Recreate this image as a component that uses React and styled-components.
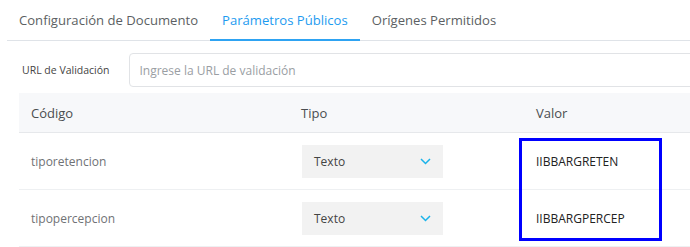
import styled, { createGlobalStyle } from 'styled-components';

const GlobalStyle = createGlobalStyle`
  *, *::before, *::after {
    box-sizing: border-box;
  }
  body {
    margin: 0;
    background: #fff;
    font-family: 'Open Sans', 'Liberation Sans', sans-serif;
  }
`;

const Page = styled.div`
  position: relative;
  width: 690px;
  height: 247px;
  overflow: hidden;
  padding-left: 7px;
`;

const Tabs = styled.div`
  display: flex;
  height: 41px;
  border-bottom: 1px solid #dfe3e8;
`;

const Tab = styled.div`
  display: flex;
  align-items: center;
  padding: 0 12px;
  font-size: 13.1px;
  color: ${p => (p.$active ? '#1d9bf0' : '#5c5f63')};
  border-bottom: 2px solid ${p => (p.$active ? '#2ea3f2' : 'transparent')};
  margin-bottom: -1px;
  white-space: nowrap;
`;

const UrlRow = styled.div`
  display: flex;
  align-items: center;
  padding: 12px 0 6px 15px;
  gap: 20px;
`;

const Label = styled.label`
  font-size: 10.5px;
  color: #444;
  white-space: nowrap;
`;

const Input = styled.input`
  flex: 1;
  height: 34px;
  margin-right: -10px;
  border: 1px solid #e1e3e6;
  border-radius: 4px;
  padding: 0 9px;
  font-family: inherit;
  font-size: 12px;
  color: #333;
  outline: none;
  &::placeholder {
    color: #9a9ea3;
  }
`;

const Table = styled.div`
  margin-left: 12px;
  display: grid;
  grid-template-columns: 270px 235px 1fr;
`;

const HeadCell = styled.div`
  height: 40px;
  display: flex;
  align-items: center;
  padding-left: 12px;
  background: #f7f8fa;
  border-bottom: 1px solid #e6e8eb;
  font-size: 13px;
  color: #4a4d50;
`;

const Cell = styled.div`
  height: 57px;
  display: flex;
  align-items: center;
  padding-left: ${p => (p.$pad ? p.$pad : 12)}px;
  border-bottom: 1px solid #eef0f2;
  font-size: 12px;
  color: ${p => (p.$strong ? '#222' : '#6f7275')};
`;

const Select = styled.div`
  width: 141px;
  height: 33px;
  background: #f2f2f2;
  display: flex;
  align-items: center;
  justify-content: space-between;
  padding: 0 12px;
  font-size: 12px;
  color: #444;
`;

const Highlight = styled.div`
  position: absolute;
  left: 519px;
  top: 138px;
  width: 143px;
  height: 103px;
  border: 3px solid #0000ff;
  pointer-events: none;
`;

const Chevron = () => (
  <svg width="11" height="7" viewBox="0 0 11 7" fill="none">
    <path d="M1 1l4.5 4.5L10 1" stroke="#1ab3ea" strokeWidth="1.5" />
  </svg>
);

const rows = [
  { code: 'tiporetencion', type: 'Texto', value: 'IIBBARGRETEN' },
  { code: 'tipopercepcion', type: 'Texto', value: 'IIBBARGPERCEP' },
];

export default function App() {
  return (
    <Page>
      <GlobalStyle />
      <Tabs>
        <Tab>Configuración de Documento</Tab>
        <Tab $active>Parámetros Públicos</Tab>
        <Tab>Orígenes Permitidos</Tab>
      </Tabs>
      <UrlRow>
        <Label>URL de Validación</Label>
        <Input placeholder="Ingrese la URL de validación" />
      </UrlRow>
      <Table>
        <HeadCell>Código</HeadCell>
        <HeadCell>Tipo</HeadCell>
        <HeadCell>Valor</HeadCell>
        {rows.map(r => (
          <>
            <Cell key={r.code + 'c'}>{r.code}</Cell>
            <Cell key={r.code + 't'} $pad={13}>
              <Select>
                {r.type}
                <Chevron />
              </Select>
            </Cell>
            <Cell key={r.code + 'v'} $strong>{r.value}</Cell>
          </>
        ))}
      </Table>
      <Highlight />
    </Page>
  );
}
